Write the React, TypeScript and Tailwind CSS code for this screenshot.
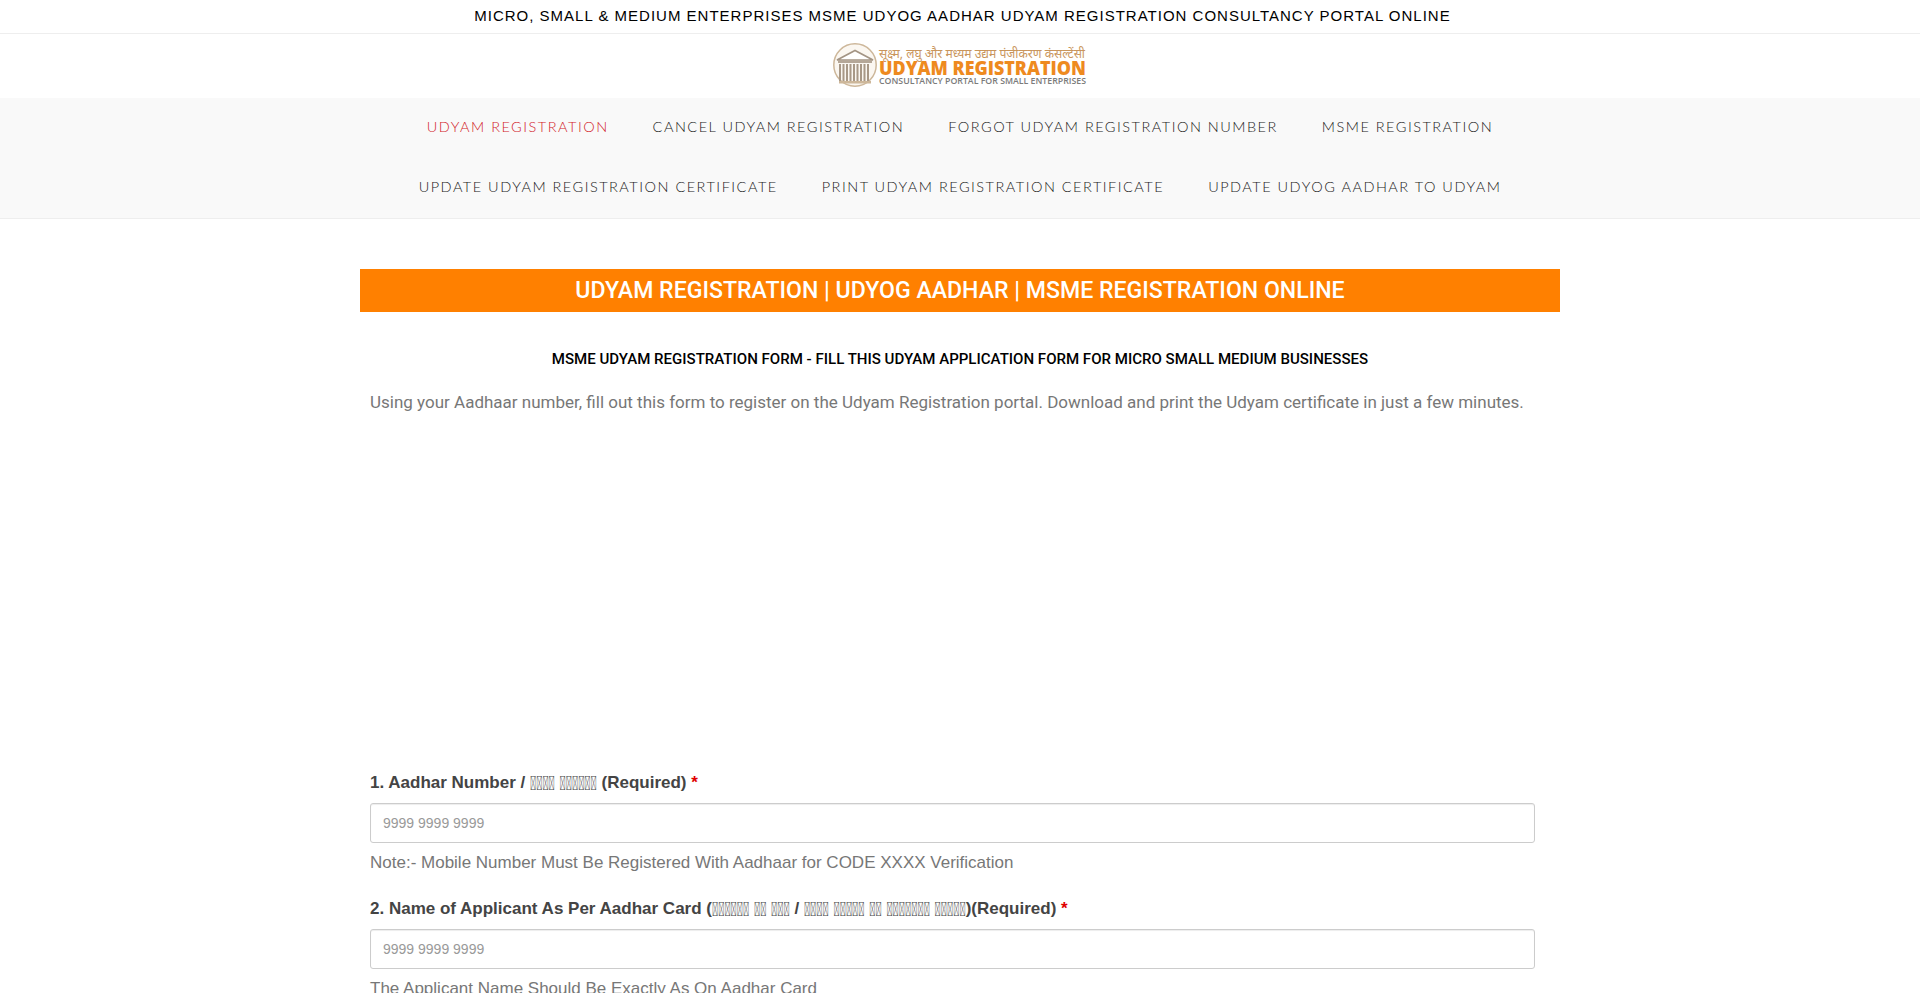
import type { ReactNode } from "react";

const navRows = [
  ["UDYAM REGISTRATION", "CANCEL UDYAM REGISTRATION", "FORGOT UDYAM REGISTRATION NUMBER", "MSME REGISTRATION"],
  ["UPDATE UDYAM REGISTRATION CERTIFICATE", "PRINT UDYAM REGISTRATION CERTIFICATE", "UPDATE UDYOG AADHAR TO UDYAM"],
];

// the reference shows missing-glyph boxes for its Hindi words
const Tofu = ({ n }: { n: number }) => (
  <span className="inline-block scale-y-[1.4] font-['Roboto',sans-serif] font-normal text-[14px] leading-none">
    {"\uE000".repeat(n)}
  </span>
);

const Logo = () => (
  <svg width="254" height="46" viewBox="0 0 254 46" className="block">
    <circle cx="22" cy="22" r="21.2" fill="#fbf7f1" stroke="#cdb79a" strokeWidth="1.5" />
    <path d="M4 17 L22 7.5 L40 17 Z" fill="#fff" stroke="#a39484" strokeWidth="1.6" />
    <rect x="5" y="17" width="34" height="3" fill="#b5a797" />
    <g fill="#a89886">
      <rect x="6" y="21" width="2" height="17" />
      <rect x="9.5" y="21" width="2" height="17" />
      <rect x="13" y="21" width="2" height="17" />
      <rect x="16.5" y="21" width="2" height="17" />
      <rect x="20" y="21" width="2" height="17" />
      <rect x="23.5" y="21" width="2" height="17" />
      <rect x="27" y="21" width="2" height="17" />
      <rect x="30.5" y="21" width="2" height="17" />
      <rect x="34" y="21" width="2" height="17" />
    </g>
    <rect x="6" y="38" width="32" height="2.5" fill="#cdb79a" />
    <text x="46" y="15" fontFamily="'Noto Sans', sans-serif" fontSize="13" fill="#c9955c" textLength="206" lengthAdjust="spacingAndGlyphs">सूक्ष्म, लघु और मध्यम उद्यम पंजीकरण कंसल्टेंसी</text>
    <text x="46" y="32" fontFamily="'Open Sans', sans-serif" fontWeight="800" fontSize="19" fill="#ee8a1f" textLength="207" lengthAdjust="spacingAndGlyphs">UDYAM REGISTRATION</text>
    <text x="46" y="41" fontFamily="'Open Sans', sans-serif" fontWeight="600" fontSize="8.5" fill="#7b7b7b" textLength="207" lengthAdjust="spacingAndGlyphs">CONSULTANCY PORTAL FOR SMALL ENTERPRISES</text>
  </svg>
);

const Field = ({ label, note }: { label: ReactNode; note: string }) => (
  <div className="mb-[21px]">
    <label className="block h-[24px] mb-[9px] font-['Liberation_Sans',sans-serif] font-bold text-[17px] leading-[26px] text-[#444]">
      {label} <span className="text-[#e00000]">*</span>
    </label>
    <input
      readOnly
      placeholder="9999 9999 9999"
      className="block w-full h-[40px] px-3 bg-white border border-[#ccc] rounded-[3px] shadow-[inset_0_1px_1px_rgba(0,0,0,0.075)] font-['Liberation_Sans',sans-serif] text-[14px] placeholder:text-[#999]"
    />
    <p className="mt-[8px] font-['Liberation_Sans',sans-serif] text-[17px] leading-[24px] text-[#777]">{note}</p>
  </div>
);

export default function App() {
  return (
    <div className="h-[993px] overflow-hidden bg-white">
      <div className="h-[34px] pl-[5px] border-b border-[#eee] text-center font-['Liberation_Sans',sans-serif] text-[15px] leading-[31px] tracking-[1px] text-black">
        MICRO, SMALL &amp; MEDIUM ENTERPRISES MSME UDYOG AADHAR UDYAM REGISTRATION CONSULTANCY PORTAL ONLINE
      </div>
      <div className="h-[64px] flex items-center justify-center">
        <Logo />
      </div>
      <nav className="h-[121px] bg-[#f9f9f9] border-b border-[#eee]">
        {navRows.map((row, i) => (
          <ul key={i} className="flex justify-center h-[60px]">
            {row.map((item) => (
              <li
                key={item}
                className={
                  "px-[22px] font-['Lato',sans-serif] font-light text-[14.5px] leading-[58px] tracking-[1.5px] " +
                  (item === "UDYAM REGISTRATION" ? "text-[#d2232a]" : "text-[#222]")
                }
              >
                {item}
              </li>
            ))}
          </ul>
        ))}
      </nav>
      <main className="w-[1200px] ml-[360px] pt-[50px]">
        <h1 className="h-[43px] bg-[#ff8000] text-center font-['Roboto',sans-serif] font-medium text-[23.1px] leading-[44px] text-white">
          UDYAM REGISTRATION | UDYOG AADHAR | MSME REGISTRATION ONLINE
        </h1>
        <h2 className="mt-[35px] text-center font-['Roboto',sans-serif] font-medium text-[15.05px] leading-[24px] text-black">
          MSME UDYAM REGISTRATION FORM - FILL THIS UDYAM APPLICATION FORM FOR MICRO SMALL MEDIUM BUSINESSES
        </h2>
        <p className="mt-[19px] ml-[10px] font-['Roboto',sans-serif] text-[17px] leading-[24px] text-[#777]">
          Using your Aadhaar number, fill out this form to register on the Udyam Registration portal. Download and print the Udyam certificate in just a few minutes.
        </p>
        <form className="mt-[356px] ml-[10px] w-[1165px]">
          <Field
            label={<>1. Aadhar Number / <Tofu n={4} /> <Tofu n={6} /> (Required)</>}
            note="Note:- Mobile Number Must Be Registered With Aadhaar for CODE XXXX Verification"
          />
          <Field
            label={<>2. Name of Applicant As Per Aadhar Card (<Tofu n={6} /> <Tofu n={2} /> <Tofu n={3} /> / <Tofu n={4} /> <Tofu n={5} /> <Tofu n={2} /> <Tofu n={7} /> <Tofu n={5} />)(Required)</>}
            note="The Applicant Name Should Be Exactly As On Aadhar Card"
          />
        </form>
      </main>
    </div>
  );
}
